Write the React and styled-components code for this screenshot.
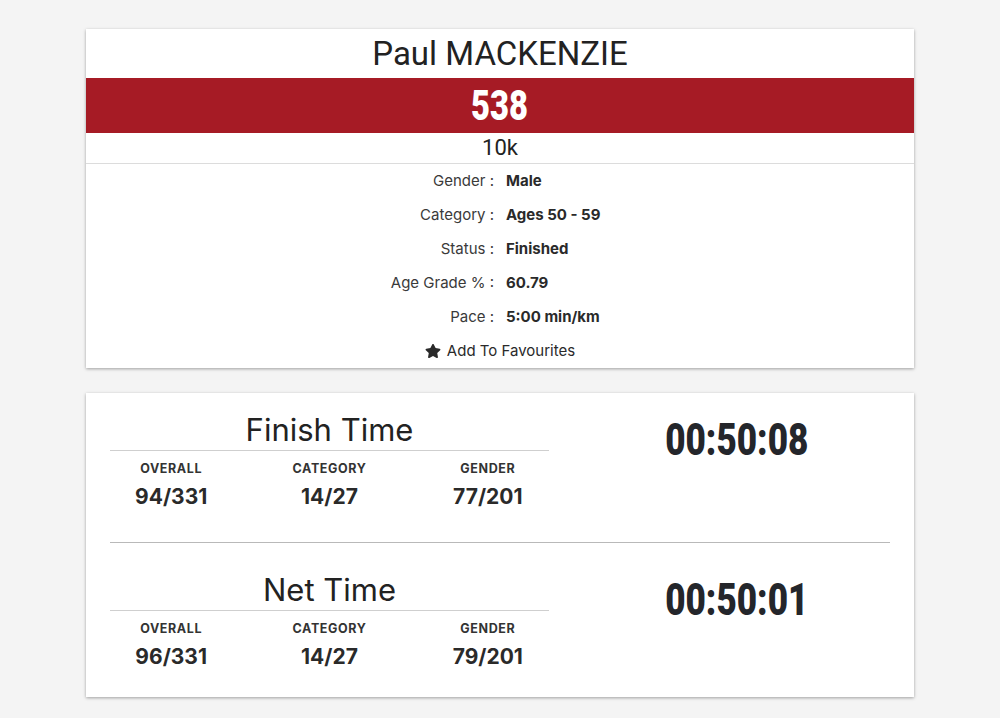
import React from "react";
import styled, { createGlobalStyle } from "styled-components";
import { FaStar } from "react-icons/fa";

const GlobalStyle = createGlobalStyle`
  body {
    margin: 0;
    background: #f4f4f4;
    font-family: Inter, "Noto Sans", sans-serif;
    color: #212529;
  }
`;

const details = [
  { label: "Gender", value: "Male" },
  { label: "Category", value: "Ages 50 - 59" },
  { label: "Status", value: "Finished" },
  { label: "Age Grade %", value: "60.79" },
  { label: "Pace", value: "5:00 min/km" },
];

const results = [
  {
    title: "Finish Time",
    time: "00:50:08",
    ranks: [
      { label: "Overall", value: "94/331" },
      { label: "Category", value: "14/27" },
      { label: "Gender", value: "77/201" },
    ],
  },
  {
    title: "Net Time",
    time: "00:50:01",
    ranks: [
      { label: "Overall", value: "96/331" },
      { label: "Category", value: "14/27" },
      { label: "Gender", value: "79/201" },
    ],
  },
];

const App = () => {
  return (
    <Page>
      <GlobalStyle />
      <Card>
        <RunnerName>Paul MACKENZIE</RunnerName>
        <BibBand>
          <Condensed>538</Condensed>
        </BibBand>
        <RaceName>10k</RaceName>
        <DetailGrid>
          {details.map((d) => (
            <React.Fragment key={d.label}>
              <DetailLabel>{d.label} :</DetailLabel>
              <DetailValue>{d.value}</DetailValue>
            </React.Fragment>
          ))}
        </DetailGrid>
        <FavouriteRow>
          <FaStar size={16} />
          Add To Favourites
        </FavouriteRow>
      </Card>

      <ResultCard>
        {results.map((r) => (
          <Section key={r.title}>
            <div>
              <SectionTitle>{r.title}</SectionTitle>
              <RankRow>
                {r.ranks.map((rank) => (
                  <Rank key={rank.label}>
                    <RankLabel>{rank.label}</RankLabel>
                    <RankValue>{rank.value}</RankValue>
                  </Rank>
                ))}
              </RankRow>
            </div>
            <TimeValue>
              <Condensed>{r.time}</Condensed>
            </TimeValue>
          </Section>
        ))}
      </ResultCard>
    </Page>
  );
};
export default App;

const Page = styled.div`
  padding: 29px 86px 20px;
  display: flex;
  flex-direction: column;
  gap: 25px;
`;

const Card = styled.div`
  background: #fff;
  box-shadow: 0 1px 3px rgba(0, 0, 0, 0.35);
`;

// stand-in for a condensed display face (Oswald-like)
const Condensed = styled.span`
  display: inline-block;
  font-family: Roboto, "Liberation Sans", sans-serif;
  font-weight: 900;
  transform: scaleX(0.78);
`;

const RunnerName = styled.div`
  font-family: Roboto, "Liberation Sans", sans-serif;
  font-size: 33px;
  line-height: 49px;
  text-align: center;
  color: #222;
`;

const BibBand = styled.div`
  background: #a61b25;
  color: #fff;
  font-size: 42px;
  line-height: 54px;
  text-align: center;
`;

const RaceName = styled.div`
  font-family: Roboto, "Liberation Sans", sans-serif;
  font-size: 22px;
  line-height: 30px;
  text-align: center;
  color: #222;
  border-bottom: 1px solid #dcdcdc;
`;

const DetailGrid = styled.div`
  display: grid;
  grid-template-columns: 1fr 1fr;
  column-gap: 12px;
  grid-auto-rows: 34px;
  align-items: center;
  margin-top: -1px;
  font-size: 15px;
`;

const DetailLabel = styled.div`
  text-align: right;
  color: #3a3a3a;
`;

const DetailValue = styled.div`
  font-weight: 700;
  color: #2a2a2a;
`;

const FavouriteRow = styled.div`
  height: 35px;
  display: flex;
  align-items: center;
  justify-content: center;
  gap: 6px;
  font-size: 15px;
  color: #2a2a2a;
`;

const ResultCard = styled(Card)`
  padding: 0 24px;
`;

const Section = styled.div`
  display: grid;
  grid-template-columns: 439px 1fr;
  padding: 19px 0 32px;

  & + & {
    border-top: 1px solid #b9b9b9;
    padding: 29px 0 27px;
  }
`;

const SectionTitle = styled.div`
  font-size: 31px;
  line-height: 36px;
  padding-bottom: 2px;
  text-align: center;
  color: #222;
  border-bottom: 1px solid #cfcfcf;
`;

const RankRow = styled.div`
  display: grid;
  grid-template-columns: repeat(3, 1fr);
  margin: 10px -18px 0;
`;

const Rank = styled.div`
  display: flex;
  flex-direction: column;
  align-items: center;
  gap: 7px;
`;

const RankLabel = styled.div`
  font-size: 12.5px;
  line-height: 16px;
  font-weight: 700;
  letter-spacing: 0.6px;
  text-transform: uppercase;
  color: #333;
`;

const RankValue = styled.div`
  font-size: 21px;
  line-height: 26px;
  font-weight: 700;
  color: #2a2a2a;
`;

const TimeValue = styled.div`
  padding-left: 34px;
  text-align: center;
  font-size: 45px;
  line-height: 53px;
  color: #24262b;
`;
